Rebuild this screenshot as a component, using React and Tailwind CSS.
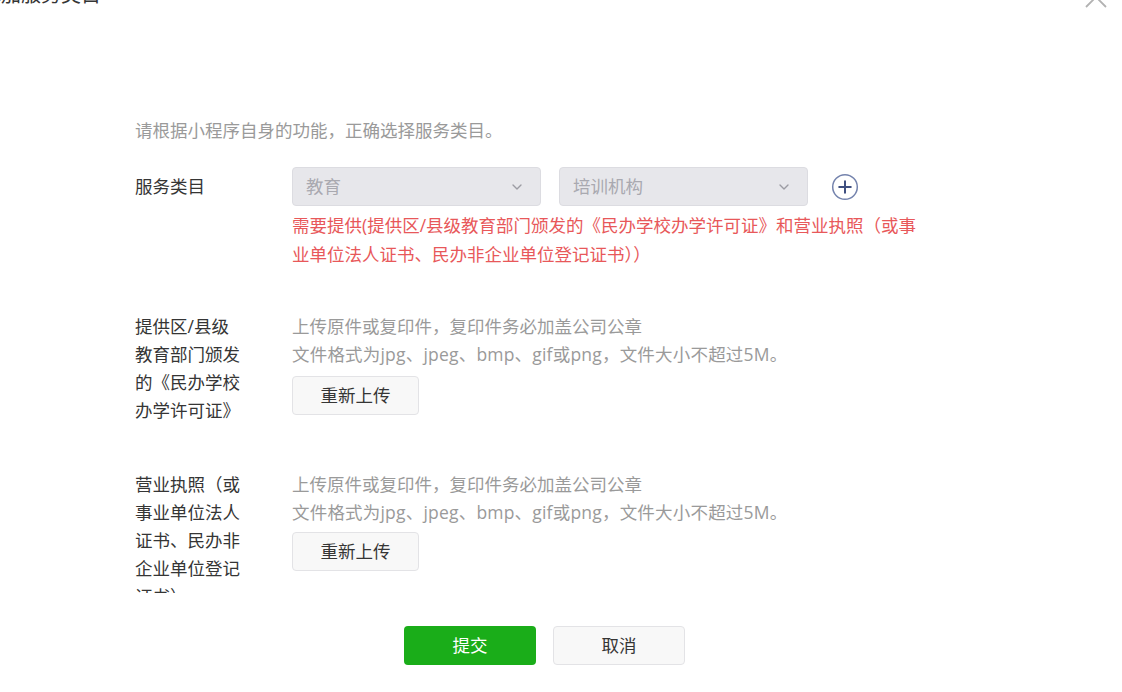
import { ChevronDown } from "lucide-react";

const font = { fontFamily: '"Open Sans", "Noto Sans CJK SC", "Noto Sans", sans-serif' };

const Select = ({ value }) => (
  <div className="w-[249px] h-[39px] rounded-[4px] border border-[#dcdce1] bg-[#e7e7eb] flex items-center justify-between pl-[13px] pr-[15px]">
    <span className="text-[#a9a9b0]">{value}</span>
    <ChevronDown size={16} strokeWidth={2} className="text-[#9c9ca3]" />
  </div>
);

const PlusCircle = () => (
  <svg width="28" height="28" viewBox="0 0 28 28" fill="none">
    <circle cx="14" cy="14" r="12.3" stroke="#7483ad" strokeWidth="1.5" />
    <path d="M14 8.2v11.6M8.2 14h11.6" stroke="#3f4f80" strokeWidth="2" strokeLinecap="round" />
  </svg>
);

const UploadRow = ({ label, gap }) => (
  <div className="flex">
    <div className="w-[157px] shrink-0">
      <div className="w-[108px] text-[#353535] leading-[28px]">{label}</div>
    </div>
    <div className="flex flex-col items-start">
      <p className="text-[#9a9a9a] leading-[28px]">上传原件或复印件，复印件务必加盖公司公章</p>
      <p className="text-[#9a9a9a] leading-[28px] tracking-[0.2px]">文件格式为jpg、jpeg、bmp、gif或png，文件大小不超过5M。</p>
      <button className={`${gap} w-[127px] h-[39px] rounded-[4px] border border-[#e3e3e6] bg-[#f8f8f8] text-[#353535]`}>
        重新上传
      </button>
    </div>
  </div>
);

export default function App() {
  return (
    <div className="w-[1122px] h-[692px] bg-white overflow-hidden flex flex-col text-[17.5px]" style={font}>
      {/* header, scrolled partly out of view */}
      <div className="-mt-[19px] h-[28px] shrink-0 flex items-center justify-between">
        <h2 className="-ml-[19px] text-[20px] leading-[28px] text-[#353535] font-normal">添加服务类目</h2>
        <svg width="26" height="26" viewBox="0 0 26 26" className="mr-[13px] mt-[4px]" fill="none">
          <path d="M3 3l20 20M23 3L3 23" stroke="#b2b2b2" strokeWidth="1.8" />
        </svg>
      </div>

      {/* body */}
      <div className="h-[584px] shrink-0 overflow-hidden pl-[135px] pt-[107px]">
        <p className="text-[#9a9a9a] leading-[28px]">请根据小程序自身的功能，正确选择服务类目。</p>

        <div className="flex mt-[23px]">
          <div className="w-[157px] shrink-0 h-[39px] flex items-center text-[#353535]">服务类目</div>
          <div>
            <div className="flex items-center">
              <Select value="教育" />
              <div className="ml-[18px]">
                <Select value="培训机构" />
              </div>
              <div className="ml-[23px]">
                <PlusCircle />
              </div>
            </div>
            <p className="mt-[5px] w-[635px] text-[#e8585a] leading-[29px]">
              需要提供(提供区/县级教育部门颁发的《民办学校办学许可证》和营业执照（或事业单位法人证书、民办非企业单位登记证书））
            </p>
          </div>
        </div>

        <div className="mt-[43px]">
          <UploadRow label="提供区/县级教育部门颁发的《民办学校办学许可证》" gap="mt-[8px]" />
        </div>
        <div className="mt-[46px]">
          <UploadRow label="营业执照（或事业单位法人证书、民办非企业单位登记证书）" gap="mt-[6px]" />
        </div>
      </div>

      {/* footer */}
      <div className="flex pl-[404px] pt-[33px] gap-[17px]">
        <button className="w-[132px] h-[39px] rounded-[4px] bg-[#1aad19] text-white">提交</button>
        <button className="w-[132px] h-[39px] rounded-[4px] border border-[#e3e3e6] bg-[#f8f8f8] text-[#353535]">取消</button>
      </div>
    </div>
  );
}
